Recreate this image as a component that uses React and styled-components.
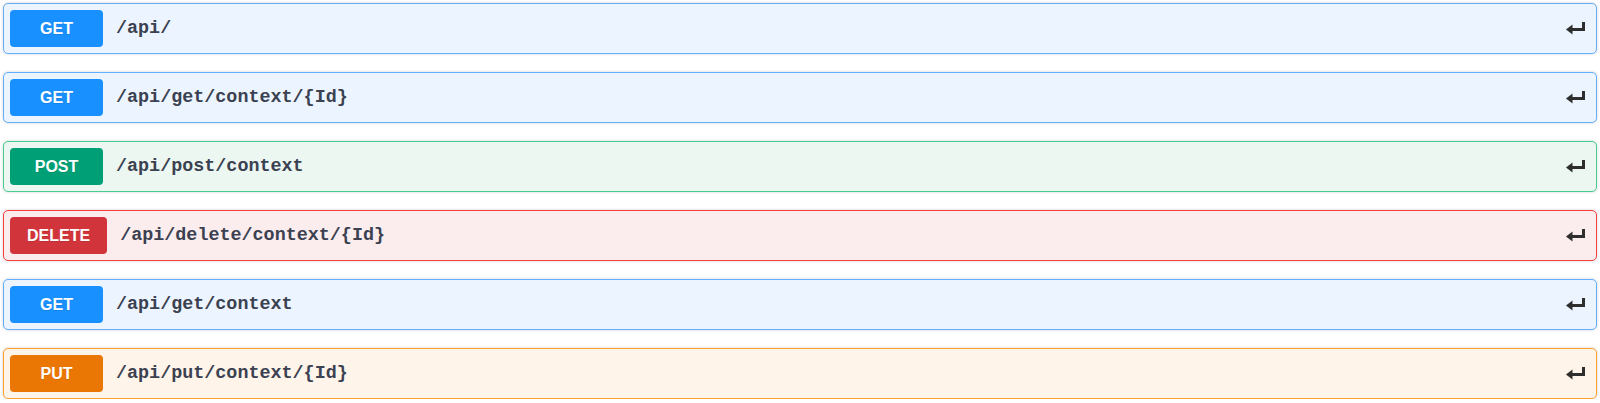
import React from 'react';
import styled, { createGlobalStyle } from 'styled-components';

const GlobalStyle = createGlobalStyle`
  body {
    margin: 0;
    background: #fff;
    font-family: "Liberation Sans", Arial, sans-serif;
  }
`;

const METHODS = {
  get: { badge: '#1890ff', border: '#61affe', bg: '#ecf5ff' },
  post: { badge: '#009f75', border: '#49cc90', bg: '#ecf7f2' },
  delete: { badge: '#d1343a', border: '#f93e3e', bg: '#fbeded' },
  put: { badge: '#ea7603', border: '#fca130', bg: '#fff4e9' },
};

const ROUTES = [
  { method: 'get', path: '/api/' },
  { method: 'get', path: '/api/get/context/{Id}' },
  { method: 'post', path: '/api/post/context' },
  { method: 'delete', path: '/api/delete/context/{Id}' },
  { method: 'get', path: '/api/get/context' },
  { method: 'put', path: '/api/put/context/{Id}' },
];

const List = styled.div`
  display: flex;
  flex-direction: column;
  gap: 18px;
  padding: 3px 3px 0 3px;
`;

const Block = styled.div`
  border: 1px solid ${(p) => METHODS[p.$method].border};
  background: ${(p) => METHODS[p.$method].bg};
  border-radius: 5px;
  box-shadow: 0 0 3px rgba(0, 0, 0, 0.19);
`;

const Summary = styled.div`
  display: flex;
  align-items: center;
  padding: 6px;
  cursor: pointer;
`;

const Method = styled.span`
  min-width: 93px;
  box-sizing: border-box;
  padding: 7px 17px;
  border-radius: 4px;
  background: ${(p) => METHODS[p.$method].badge};
  color: #fff;
  font-family: "Liberation Sans", Arial, sans-serif;
  font-size: 16px;
  font-weight: 700;
  line-height: 23px;
  text-align: center;
  text-shadow: 0 1px 0 rgba(0, 0, 0, 0.1);
`;

const Path = styled.span`
  flex: 1;
  padding: 0 13px;
  color: #3b4151;
  font-family: "Liberation Mono", "Courier New", monospace;
  font-size: 18.4px;
  font-weight: 700;
`;

const Arrow = styled.svg`
  width: 19px;
  height: 13px;
  margin-right: 5px;
  margin-top: -1px;
  fill: #2e2e2e;
`;

function EnterIcon() {
  return (
    <Arrow viewBox="0 0 19 13">
      <rect x="16" y="0" width="3" height="9" />
      <rect x="5" y="6" width="14" height="3" />
      <polygon points="0,7.5 6.5,2.5 6.5,12.5" />
    </Arrow>
  );
}

export default function App() {
  return (
    <>
      <GlobalStyle />
      <List>
        {ROUTES.map((r, i) => (
          <Block key={i} $method={r.method}>
            <Summary>
              <Method $method={r.method}>{r.method.toUpperCase()}</Method>
              <Path>{r.path}</Path>
              <EnterIcon />
            </Summary>
          </Block>
        ))}
      </List>
    </>
  );
}
